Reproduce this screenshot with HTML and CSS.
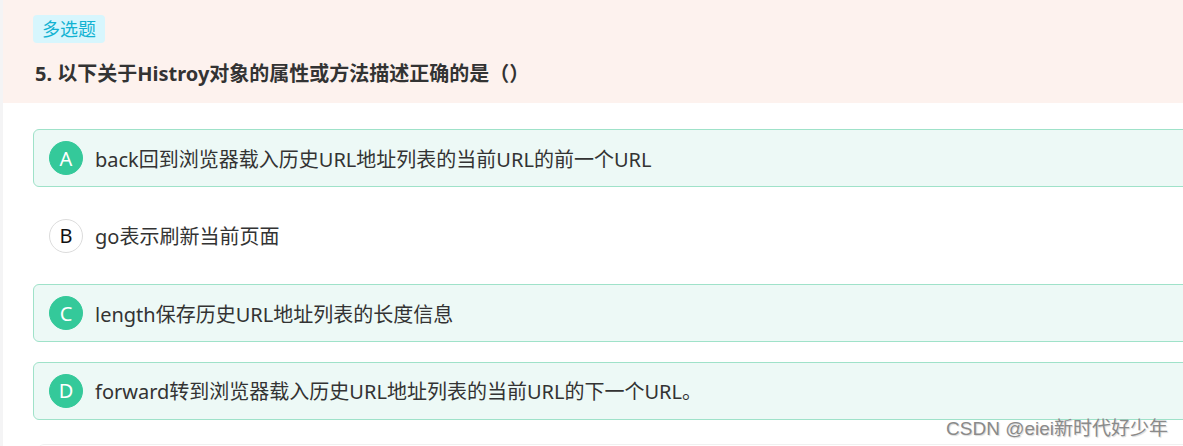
FILE: index.html
```html
<!DOCTYPE html>
<html lang="zh-CN">
<head>
  <meta charset="UTF-8" />
  <meta name="viewport" content="width=device-width, initial-scale=1" />
  <title>多选题</title>
  <link rel="stylesheet" href="styles.css">
</head>
<body>
  <div class="page">
    <div class="header">
      <span class="tag">多选题</span>
      <h2 class="title">5. 以下关于Histroy对象的属性或方法描述正确的是（）</h2>
    </div>

    <div class="options">
      <div class="option checked">
        <span class="letter">A</span>
        <span class="text">back回到浏览器载入历史URL地址列表的当前URL的前一个URL</span>
      </div>
      <div class="option">
        <span class="letter">B</span>
        <span class="text">go表示刷新当前页面</span>
      </div>
      <div class="option checked">
        <span class="letter">C</span>
        <span class="text">length保存历史URL地址列表的长度信息</span>
      </div>
      <div class="option checked">
        <span class="letter">D</span>
        <span class="text">forward转到浏览器载入历史URL地址列表的当前URL的下一个URL。</span>
      </div>
      <div class="next"></div>
    </div>

    <div class="watermark">CSDN @eiei新时代好少年</div>
  </div>
</body>
</html>
```

FILE: styles.css
```css
html, body {
  margin: 0;
  height: 100%;
}

body {
  background: #f4f4f5;
  font-family: "Noto Sans", "Noto Sans CJK SC", sans-serif;
  color: #333;
  overflow: hidden;
}

.page {
  margin-left: 3px;
  height: 100%;
  background: #fff;
  position: relative;
}

.header {
  background: #fdf2ee;
  height: 103px;
  box-sizing: border-box;
  padding: 15px 30px 0 30px;
}

.tag {
  display: inline-block;
  height: 28px;
  line-height: 28px;
  padding: 0 9px;
  font-size: 18px;
  color: #12b2d2;
  background: #d7f6fd;
  border-radius: 4px;
}

.title {
  margin: 16px 0 0 2px;
  font-size: 20px;
  line-height: 30px;
  font-weight: bold;
  color: #333;
}

.options {
  padding: 26px 0 0 30px;
  margin-right: -20px;
  display: flex;
  flex-direction: column;
  gap: 19.5px;
}

.option {
  height: 58px;
  box-sizing: border-box;
  border: 1px solid transparent;
  border-radius: 6px;
  display: flex;
  align-items: center;
  padding-left: 15px;
  font-size: 20px;
}

.option.checked {
  background: #edf9f6;
  border-color: #9fe2c9;
}

.letter {
  width: 34px;
  height: 34px;
  box-sizing: border-box;
  border-radius: 50%;
  border: 1px solid #dcdcdc;
  background: #fff;
  color: #111;
  display: flex;
  align-items: center;
  justify-content: center;
  font-size: 20px;
  margin-right: 12px;
  flex-shrink: 0;
}

.checked .letter {
  background: #34c99a;
  border-color: #34c99a;
  color: #fff;
}

.text {
  white-space: nowrap;
}

.next {
  height: 10px;
  margin-left: 5px;
  margin-top: 5px;
  border-top: 1px solid #f0f0f0;
  border-radius: 6px 0 0 0;
}

.watermark {
  position: absolute;
  right: 15px;
  bottom: 6px;
  font-family: "Liberation Sans", "Noto Sans CJK SC", sans-serif;
  font-size: 19px;
  color: #8a8a8a;
  text-shadow: 1px 1px 1px #d8d8d8;
}
```
